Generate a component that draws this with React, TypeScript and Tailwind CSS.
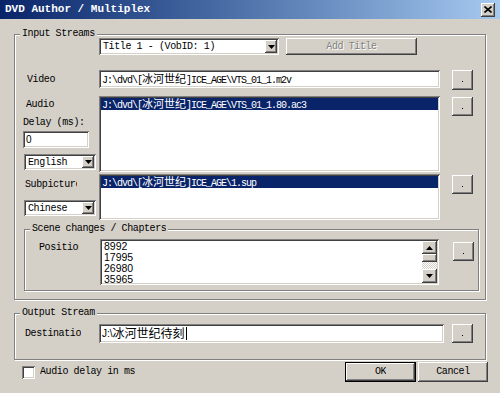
import React from 'react';

const mono = { fontFamily: '"Liberation Mono", "Noto Sans CJK SC", monospace' };
const sans = { fontFamily: '"Liberation Sans", "Noto Sans CJK SC", sans-serif' };

const raised =
  'bg-[#d4d0c8] shadow-[inset_-1px_-1px_0_#404040,inset_1px_1px_0_#ffffff,inset_-2px_-2px_0_#808080]';
const sunken =
  'bg-white shadow-[inset_1px_1px_0_#808080,inset_-1px_-1px_0_#ffffff,inset_2px_2px_0_#404040,inset_-2px_-2px_0_#d4d0c8]';
const etched =
  'border border-[#808080] shadow-[inset_1px_1px_0_#ffffff,1px_1px_0_#ffffff]';

function DotButton({ className }: { className: string }) {
  return (
    <div className={`${raised} w-[21px] h-[19px] flex items-center justify-center shrink-0 ${className}`}>
      <div className="w-[1px] h-[1px] bg-black mt-[3px]" />
    </div>
  );
}

function Arrow({ up }: { up?: boolean }) {
  return (
    <svg width="7" height="4" viewBox="0 0 7 4">
      <path d={up ? 'M3.5 0 L7 4 L0 4 Z' : 'M0 0 L7 0 L3.5 4 Z'} fill="#000" />
    </svg>
  );
}

function Combo({ text, className }: { text: string; className: string }) {
  return (
    <div className={`${sunken} flex items-stretch p-[2px] ${className}`}>
      <div className="flex-1 pl-[2px] flex items-center text-[10px] tracking-[-0.4px] text-black overflow-hidden whitespace-nowrap" style={mono}>
        {text}
      </div>
      <div className={`${raised} w-[12px] flex items-center justify-center`}>
        <Arrow />
      </div>
    </div>
  );
}

function Label({ text, className }: { text: string; className?: string }) {
  return (
    <div className={`text-[10px] leading-[12px] tracking-[-0.4px] text-black whitespace-nowrap overflow-hidden ${className ?? ''}`} style={mono}>
      {text}
    </div>
  );
}

function Path({ pre, cjk, post }: { pre: string; cjk: string; post: string }) {
  return (
    <span className="text-[10px] tracking-[-1px] whitespace-nowrap" style={mono}>
      {pre}
      <span className="text-[11px] tracking-[0px]" style={sans}>{cjk}</span>
      {post}
    </span>
  );
}

export default function App() {
  return (
    <div className="w-[500px] h-[393px] bg-[#d4d0c8] overflow-hidden flex flex-col select-none">
      {/* title bar */}
      <div className="h-[19px] shrink-0 flex items-center bg-gradient-to-r from-[#0a246a] to-[#a6caf0] pl-[5px] pr-[5px]">
        <span className="text-[11px] font-bold text-white whitespace-nowrap" style={mono}>
          DVD Author / Multiplex
        </span>
        <div className={`${raised} ml-auto w-[14px] h-[14px] flex items-center justify-center`}>
          <svg width="8" height="7" viewBox="0 0 8 7">
            <path d="M0.5 0.5 L7.5 6.5 M7.5 0.5 L0.5 6.5" stroke="#000" strokeWidth="1.6" />
          </svg>
        </div>
      </div>

      {/* input streams */}
      <div className={`${etched} relative mt-[15px] mx-[14px] h-[266px] shrink-0`}>
        <div className="absolute left-[5px] top-[-7px] bg-[#d4d0c8] px-[2px]">
          <Label text="Input Streams" />
        </div>

        <div className="flex mt-[3px] ml-[84px]">
          <Combo text="Title 1 - (VobID: 1)" className="w-[180px] h-[17px]" />
          <div className={`${raised} ml-[7px] w-[131px] h-[17px] flex items-center justify-center`}>
            <span className="text-[10px] tracking-[-0.4px] text-[#808080] [text-shadow:1px_1px_0_#fff]" style={mono}>
              Add Title
            </span>
          </div>
        </div>

        {/* video */}
        <div className="flex items-start mt-[15px]">
          <div className="w-[84px] pl-[12px] pt-[4px]">
            <Label text="Video" />
          </div>
          <div className={`${sunken} w-[341px] h-[18px] flex items-center pl-[3px] text-black`}>
            <Path pre="J:\dvd\[" cjk="冰河世纪" post="]ICE_AGE\VTS_01_1.m2v" />
          </div>
          <DotButton className="ml-[12px] h-[20px]" />
        </div>

        {/* audio */}
        <div className="flex items-start mt-[6px]">
          <div className="w-[84px] flex flex-col">
            <Label text="Audio" className="pl-[11px] pt-[3px]" />
            <Label text="Delay (ms):" className="pl-[8px] mt-[6px]" />
            <div className={`${sunken} ml-[8px] mt-[2px] w-[66px] h-[17px] flex items-center pl-[3px]`}>
              <span className="text-[10px]" style={sans}>0</span>
            </div>
            <Combo text="English" className="ml-[9px] mt-[6px] w-[72px] h-[16px]" />
          </div>
          <div className={`${sunken} w-[341px] h-[76px] p-[2px]`}>
            <div className="h-[12px] bg-[#0a246a] text-white flex items-center pl-[1px]">
              <Path pre="J:\dvd\[" cjk="冰河世纪" post="]ICE_AGE\VTS_01_1.80.ac3" />
            </div>
          </div>
          <DotButton className="ml-[12px] mt-[1px]" />
        </div>

        {/* subpicture */}
        <div className="flex items-start mt-[2px]">
          <div className="w-[84px] flex flex-col">
            <div className="pl-[10px] pt-[5px] w-[62px] overflow-hidden">
              <Label text="Subpicture" />
            </div>
            <Combo text="Chinese" className="ml-[9px] mt-[9px] w-[72px] h-[16px]" />
          </div>
          <div className={`${sunken} w-[341px] h-[46px] p-[2px]`}>
            <div className="h-[12px] bg-[#0a246a] text-white flex items-center pl-[1px]">
              <Path pre="J:\dvd\[" cjk="冰河世纪" post="]ICE_AGE\1.sup" />
            </div>
          </div>
          <DotButton className="ml-[12px] mt-[1px]" />
        </div>

        {/* scene changes */}
        <div className={`${etched} relative mt-[9px] ml-[9px] w-[455px] h-[62px]`}>
          <div className="absolute left-[5px] top-[-7px] bg-[#d4d0c8] px-[2px]">
            <Label text="Scene changes / Chapters" />
          </div>
          <div className="flex items-start">
            <div className="w-[75px] pl-[14px] pt-[12px]">
              <div className="w-[40px] overflow-hidden">
                <Label text="Position" />
              </div>
            </div>
            <div className={`${sunken} mt-[9px] w-[339px] h-[46px] p-[2px] flex`}>
              <div className="flex-1 pl-[2px] text-[10.5px] leading-[11px] text-black overflow-hidden" style={sans}>
                <div>8992</div>
                <div>17995</div>
                <div>26980</div>
                <div>35965</div>
              </div>
              <div className="w-[15px] flex flex-col">
                <div className={`${raised} h-[13px] flex items-center justify-center`}>
                  <Arrow up />
                </div>
                <div className={`${raised} h-[8px]`} />
                <div className="flex-1 bg-[repeating-conic-gradient(#ffffff_0_25%,#d4d0c8_0_50%)] bg-[length:2px_2px]" />
                <div className={`${raised} h-[14px] flex items-center justify-center`}>
                  <Arrow />
                </div>
              </div>
            </div>
            <DotButton className="ml-[14px] mt-[12px]" />
          </div>
        </div>
      </div>

      {/* output stream */}
      <div className={`${etched} relative mt-[13px] mx-[14px] h-[47px] shrink-0`}>
        <div className="absolute left-[5px] top-[-7px] bg-[#d4d0c8] px-[2px]">
          <Label text="Output Stream" />
        </div>
        <div className="flex items-start mt-[10px]">
          <div className="w-[84px] pl-[10px] pt-[4px]">
            <div className="w-[56px] overflow-hidden">
              <Label text="Destination" />
            </div>
          </div>
          <div className={`${sunken} w-[345px] h-[19px] flex items-center pl-[3px] text-black`}>
            <span className="text-[10px] whitespace-nowrap" style={sans}>J:\</span>
            <span className="text-[12px] whitespace-nowrap" style={sans}>冰河世纪待刻</span>
            <span className="w-[1px] h-[13px] bg-black ml-[1px]" />
          </div>
          <DotButton className="ml-[8px]" />
        </div>
      </div>

      {/* bottom */}
      <div className="flex items-center mt-[2px] h-[20px] pr-[12px]">
        <div className={`${sunken} ml-[22px] w-[13px] h-[13px]`} />
        <Label text="Audio delay in ms" className="ml-[5px]" />
        <div className="ml-auto w-[71px] h-[20px] border border-black">
          <div className={`${raised} w-full h-full flex items-center justify-center`}>
            <Label text="OK" />
          </div>
        </div>
        <div className={`${raised} ml-[2px] w-[70px] h-[20px] flex items-center justify-center`}>
          <Label text="Cancel" />
        </div>
      </div>
    </div>
  );
}
